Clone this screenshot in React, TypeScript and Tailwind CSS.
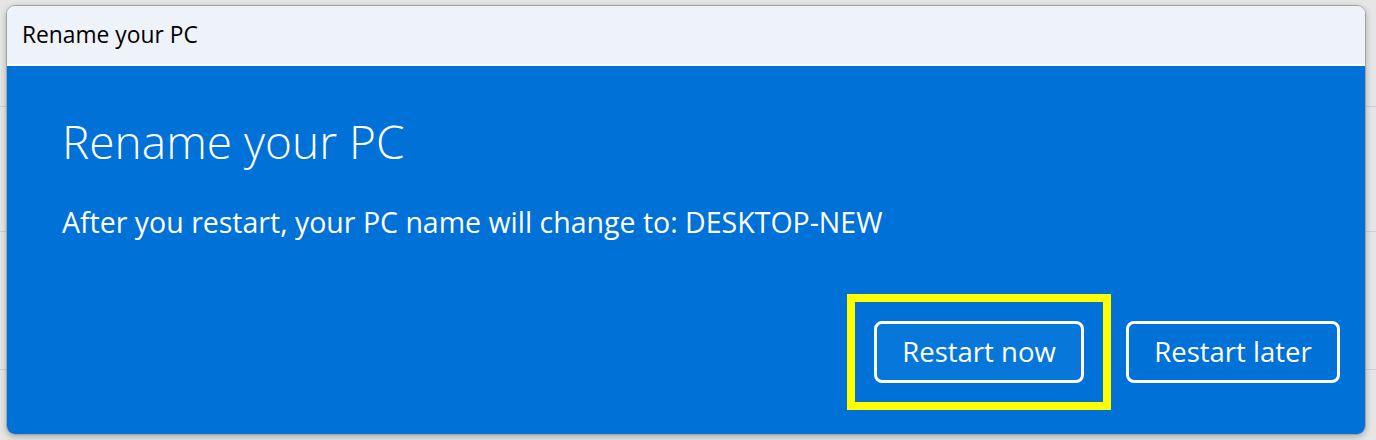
import React from "react";

const font = { fontFamily: '"Open Sans", "Noto Sans", sans-serif' };

export default function App() {
  return (
    <div
      className="relative w-[1376px] h-[440px] overflow-hidden bg-[#e6e6e6]"
      style={font}
    >
      {/* settings page behind the dialog */}
      <div className="flex flex-col">
        <div className="h-[107px] border-b border-[#cfcfcf]" />
        <div className="h-[125px] border-b border-[#cfcfcf]" />
        <div className="h-[138px] border-b border-[#cfcfcf]" />
      </div>

      <div className="absolute left-[6px] top-[5px] w-[1360px] h-[430px] flex flex-col rounded-[9px] border border-[#a3a3a3] overflow-hidden shadow-[0_2px_6px_rgba(0,0,0,0.25)]">
        <div className="h-[60px] shrink-0 flex items-center px-[15px] bg-[#eef2f9] border-b-2 border-white">
          <span className="text-[22.8px] text-black">Rename your PC</span>
        </div>
        <div className="flex-1 flex flex-col bg-[#0071d6] px-[55px] text-white">
          <h1 className="mt-[52px] text-[46px] font-light leading-none">
            Rename your PC
          </h1>
          <p className="mt-[44px] text-[28.5px] leading-none">
            After you restart, your PC name will change to: DESKTOP-NEW
          </p>
          <div className="mt-auto mb-[24px] flex items-center justify-end gap-[15px] -mr-[30px]">
            <div className="border-[8px] border-[#ffff00] p-[19px]">
              <button className="w-[210px] h-[62px] rounded-[8px] border-[3px] border-white bg-[#0677d9] text-[27.5px] leading-none">
                Restart now
              </button>
            </div>
            <button className="w-[214px] h-[62px] rounded-[8px] border-[3px] border-white bg-[#0071d6] text-[27.5px] leading-none">
              Restart later
            </button>
          </div>
        </div>
      </div>
    </div>
  );
}
